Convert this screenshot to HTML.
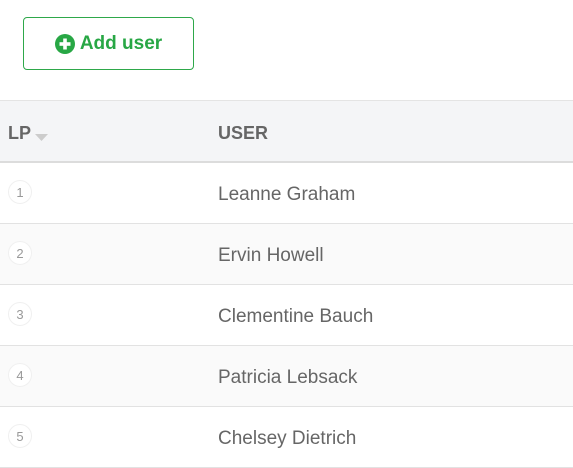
<!DOCTYPE html>
<html><head><style>
body{margin:0;width:573px;height:467px;overflow:hidden;background:#fff;font-family:"Liberation Sans",sans-serif;}
.btn{position:absolute;left:23px;top:17px;width:169px;height:51px;border:1px solid #2ea84a;border-radius:4px;box-sizing:content-box;display:flex;align-items:center;justify-content:center;color:#28a745;font-weight:bold;font-size:19px;}
.btn svg{margin-right:5px}
.hdr{position:absolute;left:0;top:100px;width:573px;height:60px;background:#f4f5f7;border-top:1px solid #e4e4e4;border-bottom:2px solid #dcdcdc;color:#666;font-weight:bold;font-size:18px;}
.hdr span{position:absolute;top:22px}
.row{position:absolute;left:0;width:573px;height:60px;border-bottom:1px solid #e2e2e2;}
.row.g{background:#fafafa}
.b{position:absolute;left:8px;top:17px;width:24px;height:24px;border-radius:50%;background:#fff;border:1px solid #f0f0f0;box-sizing:border-box;text-align:center;line-height:23px;font-size:13px;color:#999}
.n{position:absolute;left:218px;top:21px;font-size:19px;color:#666}
</style></head><body>
<div class="btn"><svg width="20" height="20" viewBox="0 0 20 20"><circle cx="10" cy="10" r="10" fill="#28a745"/><rect x="8.2" y="4.5" width="3.6" height="11" fill="#fff"/><rect x="4.5" y="8.2" width="11" height="3.6" fill="#fff"/></svg>Add user</div>
<div class="hdr"><span style="left:8px">LP</span><svg style="position:absolute;left:35px;top:33px" width="13" height="7"><path d="M0 0H13L6.5 7Z" fill="#ccc"/></svg><span style="left:218px">USER</span></div>
<div class="row" style="top:163px"><div class="b">1</div><div class="n">Leanne Graham</div></div>
<div class="row g" style="top:224px"><div class="b">2</div><div class="n">Ervin Howell</div></div>
<div class="row" style="top:285px"><div class="b">3</div><div class="n">Clementine Bauch</div></div>
<div class="row g" style="top:346px"><div class="b">4</div><div class="n">Patricia Lebsack</div></div>
<div class="row" style="top:407px"><div class="b">5</div><div class="n">Chelsey Dietrich</div></div>
</body></html>
